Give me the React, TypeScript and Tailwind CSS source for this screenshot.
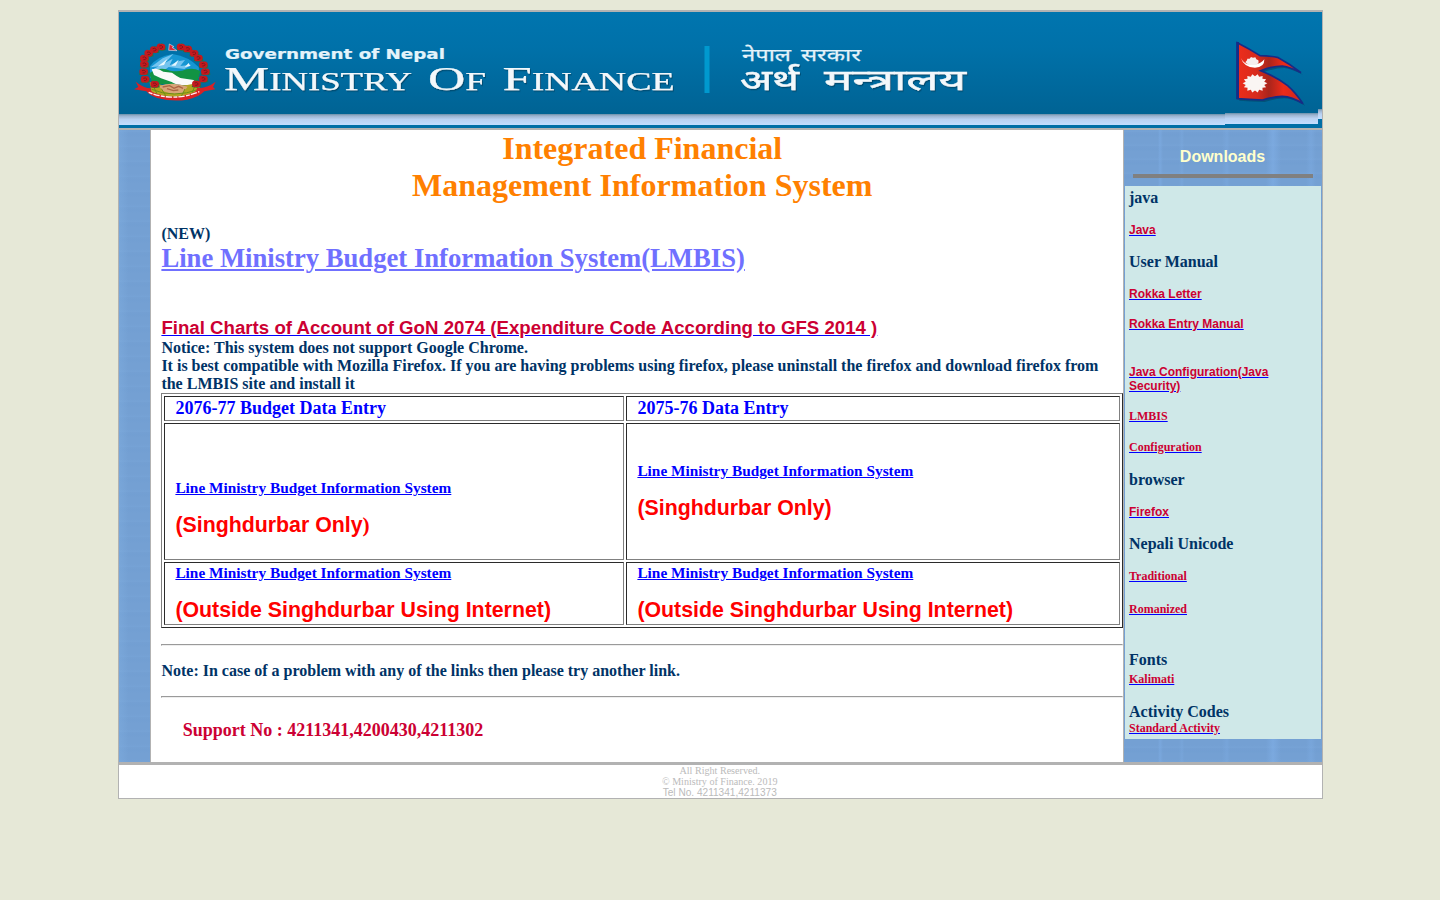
import React from "react";

const serif = "font-['Liberation_Serif',serif]";
const sans = "font-['Liberation_Sans',sans-serif]";

const flowers: [number, number][] = [
  [93, 27], [73, 35], [56, 46], [43, 61], [43, 79], [41, 101], [45, 124], [74, 139],
  [153, 27], [173, 33], [192, 46], [205, 60], [220, 80], [226, 101], [220, 123], [199, 138],
];

function Emblem() {
  return (
    <g transform="translate(130 38) scale(0.33333)">
      <path d="M60 85 Q80 55 128 48 Q175 55 207 88 L205 120 H60Z" fill="#1696d2" />
      <path d="M62 88 L98 61 L130 48 L113 67 L90 85Z M128 62 L119 82 L145 70 L165 66 L151 84 L185 80 L163 93 L116 87 L97 101 L64 97Z" fill="#75c4ef" />
      <path d="M85 84 L112 63 L102 81Z M124 83 L146 65 L137 83Z M164 87 L176 75 L181 84Z" fill="#e8f8ff" />
      <path d="M58 106 Q90 83 120 98 Q150 103 170 94 Q190 88 211 99 L201 139 H67Z" fill="#129343" />
      <path d="M65 94 Q82 88 100 101 L126 104 Q138 113 151 120 L191 126 Q197 132 191 143 L160 141 Q139 142 125 132 L93 121 L72 111Z" fill="#fafafa" />
      <path d="M59 132 Q130 155 211 133 L206 172 Q140 188 65 170Z" fill="#b2a421" />
      <path d="M88 144 Q127 129 173 146 L158 165 Q125 171 96 158Z" fill="#d7a577" />
      <path d="M98 147 L119 143 L132 151 L146 145 L159 151 M111 152 L130 158 L145 156" fill="none" stroke="#ad6444" strokeWidth="4" />
      <path d="M65 154 Q130 182 207 154 M64 164 Q130 190 207 164 M70 144 L82 170 M94 152 L107 173 M165 153 L154 175 M194 145 L184 171" fill="none" stroke="#6a8f16" strokeWidth="3" />
      <path d="M17 131 Q43 151 62 151 Q61 164 80 167 Q133 186 185 166 Q202 160 201 150 Q231 151 257 131 L249 147 L256 154 L223 160 Q205 179 171 185 Q128 192 82 180 Q59 172 49 160 L12 154 L25 147Z" fill="#d82125" />
      <path d="M56 163 Q130 193 208 161" fill="none" stroke="#fff2f2" strokeWidth="4" strokeDasharray="12 3 19 4" />
      {flowers.map(([x, y], i) => (
        <g key={i} transform={`translate(${x} ${y})`}>
          <path d="M-14 9 L-9 -4 L2 -11 L13 -4 L15 9 L3 11Z" fill="#29743b" />
          <path d="M-12 -6 Q-5 -13 0 -9 Q10 -12 13 -3 Q13 8 5 10 Q-1 8 -7 10 Q-15 6 -12 -6Z" fill="#c5191f" />
          <path d="M-5 -3 Q2 -7 6 0 Q3 5 -3 4" fill="none" stroke="#81151a" strokeWidth="3" />
        </g>
      ))}
      <path d="M118 18 L132 26 L126 28 L141 38 L116 37Z" fill="#dc2635" stroke="#c8dcf0" strokeWidth="2" />
    </g>
  );
}

const sun = Array.from({ length: 28 }, (_, i) => {
  const a = (i * Math.PI) / 14;
  const r = i % 2 ? 0.77 : 1;
  return `${(165 + Math.cos(a) * 37 * r).toFixed(1)},${(250 + Math.sin(a) * 28 * r).toFixed(1)}`;
}).join(" ");

const pennant = "M112 128 Q148 146 180 167 Q210 167 235 173 Q269 191 303 218 Q270 201 247 198 Q217 198 182 212 Q230 231 263 257 Q286 277 309 311 Q276 290 247 289 Q216 291 188 300 Q145 299 112 296Z";

function Flag() {
  return (
    <g transform="scale(0.33333) translate(3600 0)">
      <path d={pennant} fill="#04415f" opacity=".55" transform="translate(6 6)" />
      <path d={pennant} fill="url(#flagRed)" stroke="#172c86" strokeWidth="5" />
      <path d="M113 126 V297" stroke="#172c86" strokeWidth="8" />
      <path d="M123 174 Q133 196 158 194 Q184 192 193 178 Q194 203 165 203 Q131 202 123 174Z" fill="#fff" />
      <path d="M136 187 L141 181 L142 176 L149 176 L153 171 L159 173 L166 172 L169 178 L175 181 L176 187 L170 195 L146 195Z" fill="#f5eeee" />
      <polygon points={sun} fill="#faf5f3" />
    </g>
  );
}

function Banner() {
  return (
    <svg className="block h-[116px] w-[1203px]" viewBox="119 12 1203 116">
      <defs>
        <linearGradient id="sky" x1="0" y1="0" x2="0" y2="1">
          <stop offset="0" stopColor="#0075af" />
          <stop offset=".35" stopColor="#0071a9" />
          <stop offset="1" stopColor="#006394" />
        </linearGradient>
        <linearGradient id="strip" x1="0" y1="0" x2="0" y2="1">
          <stop offset="0" stopColor="#698fa9" />
          <stop offset=".17" stopColor="#9bb2cf" />
          <stop offset=".5" stopColor="#b9d2f2" />
          <stop offset="1" stopColor="#c2deff" />
        </linearGradient>
        <linearGradient id="flagRed" x1="0" y1="0" x2="1" y2="0">
          <stop offset="0" stopColor="#ed2d1b" />
          <stop offset=".3" stopColor="#d72a1d" />
          <stop offset=".48" stopColor="#a9251c" />
          <stop offset=".7" stopColor="#ed2b19" />
          <stop offset="1" stopColor="#c92620" />
        </linearGradient>
        <filter id="shade" x="-5%" y="-20%" width="110%" height="150%">
          <feDropShadow dx="1" dy="1.3" stdDeviation=".7" floodColor="#003a59" floodOpacity=".65" />
        </filter>
      </defs>
      <rect x="119" y="12" width="1203" height="116" fill="#006fa6" />
      <rect x="119" y="12" width="1203" height="102" fill="url(#sky)" />
      <rect x="119" y="114" width="1106" height="11" fill="url(#strip)" />
      <rect x="1225" y="113" width="93" height="11" fill="url(#strip)" />
      <rect x="1318" y="109" width="4" height="10" fill="url(#strip)" />
      <Emblem />
      <Flag />
      <rect x="704.5" y="46" width="5" height="47" fill="#0099cf" />
      <text x="225" y="58.7" fontFamily="DejaVu Sans" fontWeight="700" fontSize="13.6" textLength="220" lengthAdjust="spacingAndGlyphs" fill="#e4f3fa" stroke="#e4f3fa" strokeWidth=".2">Government of Nepal</text>
      <g fill="#f3f8fb" stroke="#f3f8fb" strokeWidth=".25" filter="url(#shade)" fontFamily="Liberation Serif, serif">
        <text x="224" y="90" fontSize="34" textLength="188" lengthAdjust="spacingAndGlyphs">M<tspan fontSize="24.5">INISTRY</tspan></text>
        <text x="428" y="90" fontSize="34" textLength="58" lengthAdjust="spacingAndGlyphs">O<tspan fontSize="24.5">F</tspan></text>
        <text x="502.5" y="90" fontSize="34" textLength="172" lengthAdjust="spacingAndGlyphs">F<tspan fontSize="24.5">INANCE</tspan></text>
      </g>
      <g fill="#e4f3fa" stroke="#e4f3fa" strokeWidth=".25" fontFamily="Noto Sans, Noto Sans Devanagari, sans-serif" fontWeight="400">
        <text x="742" y="60.7" fontSize="17" textLength="49" lengthAdjust="spacingAndGlyphs">नेपाल</text>
        <text x="801" y="60.7" fontSize="17" textLength="60" lengthAdjust="spacingAndGlyphs">सरकार</text>
      </g>
      <g fill="#f3f8fb" stroke="#f3f8fb" strokeWidth=".45" filter="url(#shade)" fontFamily="Noto Sans, Noto Sans Devanagari, sans-serif" fontWeight="400">
        <text x="740" y="90" fontSize="28.5" textLength="59" lengthAdjust="spacingAndGlyphs">अर्थ</text>
        <text x="824" y="90" fontSize="28.5" textLength="142" lengthAdjust="spacingAndGlyphs">मन्त्रालय</text>
      </g>
    </svg>
  );
}

type Entry = { text: string; kind: "head" | "sans" | "serif"; gap: string };
const downloads: Entry[] = [
  { text: "java", kind: "head", gap: "mt-[3px]" },
  { text: "Java", kind: "sans", gap: "mt-4" },
  { text: "User Manual", kind: "head", gap: "mt-4" },
  { text: "Rokka Letter", kind: "sans", gap: "mt-4" },
  { text: "Rokka Entry Manual", kind: "sans", gap: "mt-4" },
  { text: "Java Configuration(Java Security)", kind: "sans", gap: "mt-[34px]" },
  { text: "LMBIS", kind: "serif", gap: "mt-4" },
  { text: "Configuration", kind: "serif", gap: "mt-[17px]" },
  { text: "browser", kind: "head", gap: "mt-[17px]" },
  { text: "Firefox", kind: "sans", gap: "mt-4" },
  { text: "Nepali Unicode", kind: "head", gap: "mt-4" },
  { text: "Traditional", kind: "serif", gap: "mt-4" },
  { text: "Romanized", kind: "serif", gap: "mt-[19px]" },
  { text: "Fonts", kind: "head", gap: "mt-[35px]" },
  { text: "Kalimati", kind: "serif", gap: "mt-[3px]" },
  { text: "Activity Codes", kind: "head", gap: "mt-[17px]" },
  { text: "Standard Activity", kind: "serif", gap: "mt-0" },
];

function Download({ text, kind, gap }: Entry) {
  if (kind === "head") return <h3 className={`${gap} text-base leading-[18px] font-bold text-[#003366]`}>{text}</h3>;
  return (
    <div className={`${gap} text-xs leading-[14px] font-bold ${kind === "sans" ? sans : serif}`}>
      <a href="#" className="text-[#cc0033] underline decoration-[#0000ff]">{text}</a>
    </div>
  );
}

const cell = "border border-t-[#2b2b2b] border-l-[#2b2b2b] border-r-[#808080] border-b-[#808080] pl-2.5";

function SystemCell({ note, top, serifClose }: { note: string; top: string; serifClose?: boolean }) {
  return (
    <div className={`${cell} ${top}`}>
      <a href="#" className="block text-[15.33px] leading-[17px] font-bold text-[#0000ff] underline">Line Ministry Budget Information System</a>
      <p className={`mt-[17px] text-[21.33px] leading-6 font-bold text-[#ff0000] ${sans}`}>
        {note}{serifClose && <span className={serif}>)</span>}
      </p>
    </div>
  );
}

export default function App() {
  return (
    <div className={`min-h-screen bg-[#e6e8d7] pt-2.5 pl-[118px] ${serif}`}>
      <div className="w-[1205px] border border-[#b2b2b2] bg-white">
        <header className="border-t border-b-2 border-[#b2b2b2]"><Banner /></header>

        <div className="flex h-[632px]">
          <div className="w-8 shrink-0 border-r border-[#b2b2b2] bg-[#74a0d3] bg-[linear-gradient(90deg,rgba(130,178,228,0.35)_0px,rgba(130,178,228,0.1)_7px,transparent_9px),repeating-linear-gradient(0deg,rgba(130,178,230,0.14)_0px,transparent_3px,transparent_9px,rgba(90,140,200,0.06)_12px,transparent_15px)]" />

          <main className="w-[972px] shrink-0 pl-[10.4px] font-bold text-[#003366]">
            <h1 className="text-center text-[32px] leading-[37px] text-[#ff8000]">Integrated Financial<br />Management Information System</h1>
            <p className="mt-[21px] text-base leading-[18px]">(NEW)</p>
            <a href="#" className="block text-[26.67px] leading-[30px] text-[#7070ff] underline">Line Ministry Budget Information System(LMBIS)</a>
            <a href="#" className={`mt-[44px] mb-px block text-[18.67px] leading-[21px] text-[#cc0033] underline decoration-[#0000ff] ${sans}`}>Final Charts of Account of GoN 2074 (Expenditure Code According to GFS 2014 )</a>
            <p className="text-base leading-[18px]">Notice: This system does not support Google Chrome.</p>
            <p className="text-base leading-[18px]">It is best compatible with Mozilla Firefox. If you are having problems using firefox, please uninstall the firefox and download firefox from the LMBIS site and install it</p>

            <div className="grid h-[235px] grid-cols-[460px_494px] grid-rows-[25px_137px_63px] gap-0.5 border border-t-[#808080] border-l-[#808080] border-r-[#2b2b2b] border-b-[#2b2b2b] p-0.5">
              <div className={`${cell} pt-px text-lg leading-[21px] text-[#0000ff]`}>2076-77 Budget Data Entry</div>
              <div className={`${cell} pt-px text-lg leading-[21px] text-[#0000ff]`}>2075-76 Data Entry</div>
              <SystemCell note="(Singhdurbar Only" serifClose top="pt-[55px]" />
              <SystemCell note="(Singhdurbar Only)" top="pt-[38px]" />
              <SystemCell note="(Outside Singhdurbar Using Internet)" top="pt-px" />
              <SystemCell note="(Outside Singhdurbar Using Internet)" top="pt-px" />
            </div>

            <hr className="mt-4 h-0.5 border border-t-[#9a9a9a] border-l-[#9a9a9a] border-r-[#eeeeee] border-b-[#eeeeee]" />
            <p className="mt-4 text-base leading-[18px]">Note: In case of a problem with any of the links then please try another link.</p>
            <hr className="mt-4 h-0.5 border border-t-[#9a9a9a] border-l-[#9a9a9a] border-r-[#eeeeee] border-b-[#eeeeee]" />
            <p className="mt-[22px] pl-[21.3px] text-lg leading-[21px] text-[#cc0033]">Support No : 4211341,4200430,4211302</p>
          </main>

          <aside className="w-[199px] shrink-0 border-l border-[#b2b2b2] bg-[#74a0d3] bg-[linear-gradient(90deg,transparent_34px,rgba(130,178,235,0.4)_36px,transparent_39px,transparent_55px,rgba(130,178,235,0.25)_58px,transparent_60px,transparent_98px,rgba(130,178,235,0.25)_103px,transparent_106px,transparent_142px,rgba(130,178,235,0.5)_149px,transparent_157px,transparent_182px,rgba(130,178,235,0.3)_187px,transparent_192px),repeating-linear-gradient(0deg,rgba(130,178,230,0.15)_0px,transparent_3px,transparent_8px,rgba(90,140,200,0.08)_11px,transparent_14px)] px-px">
            <h2 className={`pt-[18px] pr-px text-center text-base leading-[18px] font-bold text-[#ffffcc] ${sans}`}>Downloads</h2>
            <div className="mx-auto mt-2 h-1 w-[180px] bg-[#808080]" />
            <div className="mt-2 flow-root h-[553px] bg-[#cfe8e8] px-1">
              {downloads.map((d) => <Download key={d.text} {...d} />)}
            </div>
          </aside>
        </div>

        <footer className="h-9 border-t-[3px] border-[#b2b2b2] pr-[1.5px] text-center text-[10.1px] leading-[11px] text-[#bbbbbb]">
          <p>All Right Reserved.</p>
          <p>© Ministry of Finance. 2019</p>
          <p className={sans}>Tel No. 4211341,4211373</p>
        </footer>
      </div>
    </div>
  );
}
